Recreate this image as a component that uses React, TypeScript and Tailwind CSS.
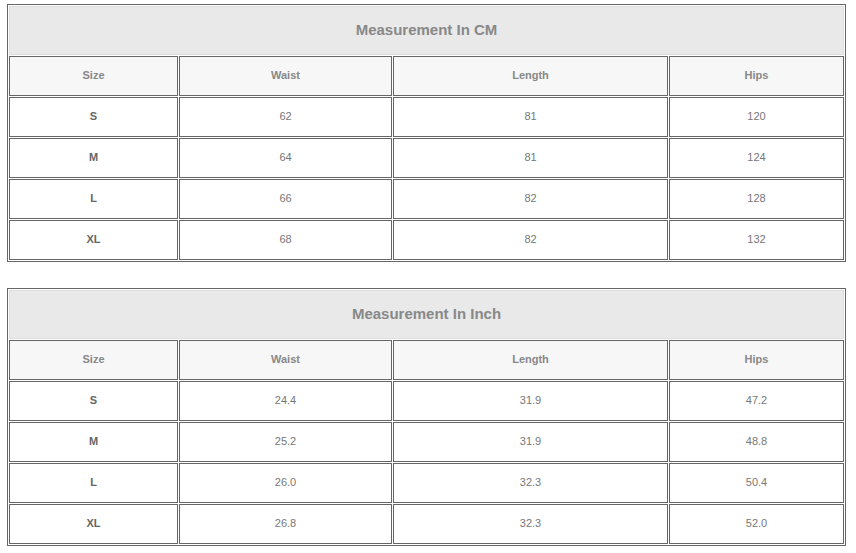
import React from 'react';

type Row = [string, string, string, string];

const cmRows: Row[] = [
  ['S', '62', '81', '120'],
  ['M', '64', '81', '124'],
  ['L', '66', '82', '128'],
  ['XL', '68', '82', '132'],
];

const inchRows: Row[] = [
  ['S', '24.4', '31.9', '47.2'],
  ['M', '25.2', '31.9', '48.8'],
  ['L', '26.0', '32.3', '50.4'],
  ['XL', '26.8', '32.3', '52.0'],
];

const headers = ['Size', 'Waist', 'Length', 'Hips'];

function SizeTable({ title, rows }: { title: string; rows: Row[] }) {
  return (
    <div className="w-[839px] border border-[#666] bg-white p-px">
      <div className="grid grid-cols-[169px_213px_275px_175px] gap-px">
        <div className="col-span-4 flex h-[49px] items-center justify-center border border-[#dedede] bg-[#e9e9e9] text-[15px] font-bold text-[#888]">
          {title}
        </div>
        {headers.map((h) => (
          <div
            key={h}
            className="flex h-[40px] items-center justify-center border border-[#666] bg-[#f7f7f7] pb-px text-[11px] font-bold text-[#888]"
          >
            {h}
          </div>
        ))}
        {rows.map((row) =>
          row.map((cell, i) => (
            <div
              key={row[0] + i}
              className={`flex h-[40px] items-center justify-center border border-[#666] bg-white pb-[2px] text-[11px] ${
                i === 0 ? 'font-bold text-[#666]' : 'text-[#777]'
              }`}
            >
              {cell}
            </div>
          ))
        )}
      </div>
    </div>
  );
}

export default function App() {
  return (
    <div className="min-h-[553px] bg-white pl-[7px] pt-[4px] font-['Liberation_Sans',Arial,sans-serif]">
      <div className="flex flex-col gap-[26px]">
        <SizeTable title="Measurement In CM" rows={cmRows} />
        <SizeTable title="Measurement In Inch" rows={inchRows} />
      </div>
    </div>
  );
}
